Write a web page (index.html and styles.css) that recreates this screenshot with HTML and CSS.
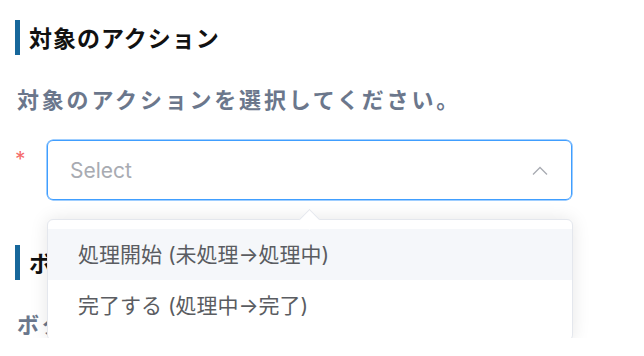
FILE: index.html
```html
<!DOCTYPE html>
<html lang="ja">
<head>
  <meta charset="UTF-8" />
  <title>対象のアクション</title>
  <link rel="stylesheet" href="styles.css">
</head>
<body>

<div class="section">
  <h2 class="title">対象のアクション</h2>
  <p class="desc">対象のアクションを選択してください。</p>

  <div class="form-row">
    <span class="required">*</span>
    <div class="select-wrap">
      <div class="select">
        <span class="placeholder">Select</span>
        <svg class="chevron" width="16" height="10" viewBox="0 0 16 10">
          <path d="M1 8.5 L8 1.5 L15 8.5" fill="none" stroke="#a8abb2" stroke-width="1.3" />
        </svg>
      </div>

      <div class="dropdown">
        <span class="dropdown-arrow"></span>
        <ul class="options">
          <li class="option hover">処理開始 (未処理→処理中)</li>
          <li class="option">完了する (処理中→完了)</li>
        </ul>
      </div>
    </div>
  </div>
</div>

<div class="section">
  <h2 class="title title-next">ボタンの表示</h2>
  <p class="desc">ボタンの表示方法を選択してください。</p>
</div>

</body>
</html>
```

FILE: styles.css
```css
body {
  margin: 0;
  background: #fff;
  font-family: "Inter", "Noto Sans CJK JP", sans-serif;
}

.section {
  padding-left: 15px;
}

.title {
  margin: 20px 0 0 0;
  height: 35px;
  line-height: 35px;
  border-left: 5px solid #17679b;
  padding-left: 9px;
  font-family: "Noto Sans CJK JP", sans-serif;
  font-size: 23px;
  font-weight: bold;
  letter-spacing: 1px;
  color: #111;
}

.title-next {
  margin-top: 45px;
}

.desc {
  margin: 28px 0 0 2px;
  line-height: 30px;
  font-family: "Noto Sans CJK JP", sans-serif;
  font-size: 22px;
  font-weight: bold;
  letter-spacing: 2.8px;
  color: #6b778c;
}

.form-row {
  display: flex;
  align-items: flex-start;
  margin-top: 27px;
}

.required {
  width: 32px;
  margin-top: 9px;
  font-size: 21px;
  line-height: 1;
  color: #f56c6c;
}

.select-wrap {
  position: relative;
  width: 525px;
}

.select {
  box-sizing: border-box;
  height: 60px;
  display: flex;
  align-items: center;
  justify-content: space-between;
  padding: 0 23px 0 22px;
  border: 1px solid #409eff;
  border-radius: 6px;
  box-shadow: 0 0 0 0.5px #409eff;
}

.placeholder {
  font-size: 21px;
  color: #a8abb2;
}

.chevron {
  display: block;
  margin-top: 2px;
}

.dropdown {
  position: absolute;
  top: 79px;
  left: 0;
  right: -1px;
  background: #fff;
  border: 1px solid #e4e7ed;
  border-radius: 6px;
  box-shadow: 0 0 18px rgba(0, 0, 0, 0.1);
  z-index: 10;
}

.dropdown-arrow {
  position: absolute;
  top: -8px;
  left: 254px;
  width: 14px;
  height: 14px;
  background: #fff;
  border-top: 1px solid #e4e7ed;
  border-left: 1px solid #e4e7ed;
  transform: rotate(45deg);
}

.options {
  list-style: none;
  margin: 0;
  padding: 9px 0;
}

.option {
  height: 51px;
  line-height: 51px;
  padding-left: 30px;
  font-size: 21px;
  color: #5a5c61;
}

.option.hover {
  background: #f5f7fa;
}
```
